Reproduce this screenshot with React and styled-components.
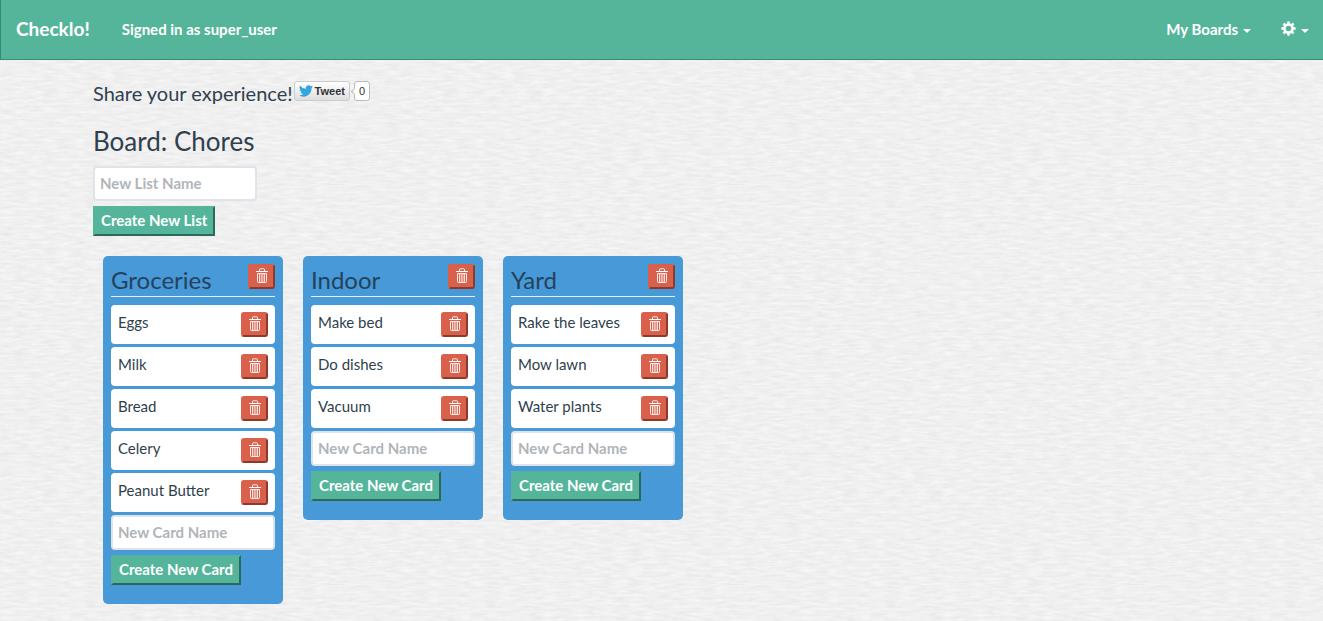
import React from "react";
import styled, { createGlobalStyle } from "styled-components";

const paper = encodeURIComponent(
  `<svg xmlns="http://www.w3.org/2000/svg" width="400" height="400"><filter id="p" x="0" y="0" width="100%" height="100%" color-interpolation-filters="sRGB"><feTurbulence type="fractalNoise" baseFrequency="0.07 0.36" numOctaves="5" seed="8" stitchTiles="stitch"/><feColorMatrix values="0.08 0 0 0 0.9  0.08 0 0 0 0.9  0.08 0 0 0 0.9  0 0 0 0 1"/></filter><rect width="400" height="400" filter="url(#p)"/></svg>`
);

const GlobalStyle = createGlobalStyle`
  *, *::before, *::after { box-sizing: border-box; }
  body {
    margin: 0;
    color: #2f3f4d;
    background: #f0f0f0 url("data:image/svg+xml,${paper}");
    font: 400 15px/20px Lato, "Liberation Sans", sans-serif;
  }
  button, input { font: inherit; }
`;

const Navbar = styled.nav`
  display: flex;
  align-items: center;
  height: 60px;
  padding: 0 14px 2px 15px;
  background: #55b59a;
  border: 1px solid #398a73;
  border-width: 0 0 1px 1px;
  color: #fff;
`;

const Brand = styled.a`
  color: inherit;
  font-size: 19px;
  font-weight: 700;
  text-decoration: none;
`;

const SignedIn = styled.span`
  margin-left: 32px;
  font-weight: 700;
`;

const NavMenus = styled.div`
  display: flex;
  gap: 30px;
  margin-left: auto;
`;

const MenuButton = styled.button`
  display: flex;
  align-items: center;
  gap: 5px;
  padding: 0;
  border: 0;
  background: none;
  color: inherit;
  font-weight: 700;
  cursor: pointer;
`;

const Caret = styled.span`
  margin-top: 4px;
  border: 4px solid transparent;
  border-top-color: currentColor;
  border-bottom: 0;
`;

const Page = styled.main`
  max-width: 1137px;
  margin: 0 auto;
  padding: 20px 0 16px;
`;

const Share = styled.div`
  display: flex;
  align-items: flex-start;
`;

const ShareTitle = styled.h4`
  margin: 0;
  font-size: 20px;
  font-weight: 400;
  line-height: 26px;
`;

const TweetButton = styled.button`
  display: flex;
  align-items: center;
  gap: 2px;
  height: 20px;
  margin: 1px 4px 0 1px;
  padding: 0 4px;
  border: 1px solid #ccc;
  border-radius: 3px;
  background: linear-gradient(#fff, #dedede);
  color: #333;
  font: 700 11px/18px "Liberation Sans", Arial, sans-serif;
  cursor: pointer;
`;

const TweetCount = styled.a`
  position: relative;
  height: 20px;
  margin-top: 1px;
  padding: 0 4px;
  border: 1px solid #bbb;
  border-radius: 3px;
  background: #fff;
  color: #333;
  font: 11px/18px "Liberation Sans", Arial, sans-serif;
  text-decoration: none;

  &::before {
    content: "";
    position: absolute;
    top: 7px;
    left: -3px;
    width: 5px;
    height: 5px;
    border: 1px solid #bbb;
    border-width: 0 0 1px 1px;
    background: #fff;
    transform: rotate(45deg);
  }
`;

const BoardTitle = styled.h1`
  margin: 19px 0 9px;
  font-size: 26px;
  font-weight: 400;
  line-height: 32px;
`;

const Form = styled.form`
  display: flex;
  flex-direction: column;
  align-items: flex-start;
  gap: 5px;
`;

const TextInput = styled.input`
  width: ${(p) => p.$width};
  height: 35px;
  padding: 0 5px 2px;
  border: 2px solid #dfe4ea;
  border-radius: 4px;
  background: #fff;
  color: inherit;
  &::placeholder { color: #b0b5ba; opacity: 1; font-weight: 700; }
`;

const CreateButton = styled.button`
  height: 30px;
  padding: 0 6px 2px;
  border: 2px solid;
  border-color: #55b59a #2b6a59 #2b6a59 #55b59a;
  background: #55b59a;
  color: #fff;
  font-weight: 700;
  line-height: 24px;
  cursor: pointer;
`;

const Lists = styled.div`
  display: flex;
  flex-wrap: wrap;
  align-items: flex-start;
  gap: 20px;
  padding: 20px 10px 0;
`;

const List = styled.section`
  width: 180px;
  padding: 8px 8px 19px;
  border-radius: 5px;
  background: #4899d8;
`;

const ListHeader = styled.header`
  display: flex;
  align-items: flex-start;
  justify-content: space-between;
  height: 33px;
  margin-bottom: 8px;
  border-bottom: 1px solid #e4eef6;
`;

const ListTitle = styled.h2`
  margin: 0;
  font-size: 24px;
  font-weight: 400;
  line-height: 32px;
  color: #24425c;
`;

const Cards = styled.ul`
  display: flex;
  flex-direction: column;
  gap: 3px;
  margin: 0 0 3px;
  padding: 0;
  list-style: none;
`;

const Card = styled.li`
  display: flex;
  align-items: flex-start;
  justify-content: space-between;
  height: 39px;
  padding: 7px;
  border-radius: 4px;
  background: #fff;
`;

const CardName = styled.span`
  line-height: 20px;
`;

const DeleteButton = styled.button`
  display: grid;
  place-items: center;
  width: 27px;
  height: 25px;
  padding: 0 0 2px 1px;
  border: 2px solid;
  border-color: #d9604a #8c3a2c #8c3a2c #d9604a;
  border-radius: 3px;
  background: #d9604a;
  color: #fff;
  cursor: pointer;
`;

const TrashIcon = () => (
  <svg width="12" height="15" viewBox="0 0 12 15" fill="none" stroke="currentColor" aria-hidden="true">
    <path d="M3.500 3V1.500q0-.7.7-.7h3.600q.7 0 .7.700V3" opacity=".85" />
    <path d="M0 3.500h12" />
    <path d="M1.500 5.500h9v8q0 1-1 1h-7q-1 0-1-1z" opacity=".9" />
    <path d="M3.500 6v8M5.200 6v8M6.900 6v8M8.500 6v8" opacity=".8" />
  </svg>
);

const GearIcon = () => (
  <svg width="15" height="15" viewBox="-7.5 -7.5 15 15" fill="none" stroke="currentColor" aria-hidden="true">
    <circle r="4" strokeWidth="2.4" />
    {[0, 45, 90, 135, 180, 225, 270, 315].map((a) => (
      <path key={a} d="M-1.3-4.6-.9-7H.9L1.3-4.6z" fill="currentColor" strokeWidth=".4" transform={`rotate(${a})`} />
    ))}
  </svg>
);

const BirdIcon = () => (
  <svg width="14" height="12" viewBox="0 0 24 20" fill="#35a6dc" aria-hidden="true">
    <path d="M24 2.4a10 10 0 0 1-2.8.8A5 5 0 0 0 23.3.5a10 10 0 0 1-3.1 1.2A4.9 4.9 0 0 0 11.8 6.2 14 14 0 0 1 1.7 1a4.9 4.9 0 0 0 1.5 6.6A5 5 0 0 1 1 7a4.9 4.9 0 0 0 3.9 4.8 5 5 0 0 1-2.2.1 4.9 4.9 0 0 0 4.6 3.4A10 10 0 0 1 0 17.3 14 14 0 0 0 21.5 4.9 10 10 0 0 0 24 2.4z" />
  </svg>
);

const lists = [
  { name: "Groceries", cards: ["Eggs", "Milk", "Bread", "Celery", "Peanut Butter"] },
  { name: "Indoor", cards: ["Make bed", "Do dishes", "Vacuum"] },
  { name: "Yard", cards: ["Rake the leaves", "Mow lawn", "Water plants"] },
];

const stay = (event) => event.preventDefault();

export default function App() {
  return (
    <>
      <GlobalStyle />
      <Navbar>
        <Brand href="#">Checklo!</Brand>
        <SignedIn>Signed in as super_user</SignedIn>
        <NavMenus>
          <MenuButton type="button">
            My Boards
            <Caret />
          </MenuButton>
          <MenuButton type="button" aria-label="Settings">
            <GearIcon />
            <Caret />
          </MenuButton>
        </NavMenus>
      </Navbar>
      <Page>
        <Share>
          <ShareTitle>Share your experience!</ShareTitle>
          <TweetButton type="button">
            <BirdIcon />
            Tweet
          </TweetButton>
          <TweetCount href="#">0</TweetCount>
        </Share>
        <BoardTitle>Board: Chores</BoardTitle>
        <Form onSubmit={stay}>
          <TextInput $width="164px" placeholder="New List Name" aria-label="New List Name" />
          <CreateButton>Create New List</CreateButton>
        </Form>
        <Lists>
          {lists.map((list) => (
            <List key={list.name}>
              <ListHeader>
                <ListTitle>{list.name}</ListTitle>
                <DeleteButton type="button" aria-label={`Delete ${list.name}`}>
                  <TrashIcon />
                </DeleteButton>
              </ListHeader>
              <Cards>
                {list.cards.map((card) => (
                  <Card key={card}>
                    <CardName>{card}</CardName>
                    <DeleteButton type="button" aria-label={`Delete ${card}`}>
                      <TrashIcon />
                    </DeleteButton>
                  </Card>
                ))}
              </Cards>
              <Form onSubmit={stay}>
                <TextInput $width="100%" placeholder="New Card Name" aria-label="New Card Name" />
                <CreateButton>Create New Card</CreateButton>
              </Form>
            </List>
          ))}
        </Lists>
      </Page>
    </>
  );
}
